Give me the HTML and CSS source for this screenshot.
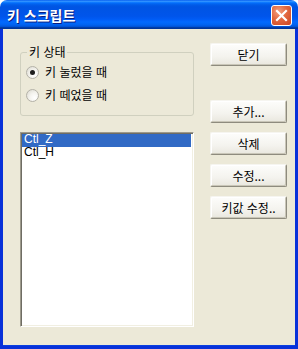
FILE: index.html
```html
<!DOCTYPE html>
<html lang="ko">
<head>
<meta charset="utf-8">
<link rel="stylesheet" href="styles.css">
</head>
<body>
<div class="window">
  <div class="titlebar">
    <span class="title">키 스크립트</span>
    <span class="close">
      <svg width="21" height="21" viewBox="0 0 21 21">
        <path d="M6 6 L15 15 M15 6 L6 15" stroke="#fff" stroke-width="2.2" stroke-linecap="square"/>
      </svg>
    </span>
  </div>
  <div class="client">
    <div class="left">
      <fieldset class="group">
        <legend>키 상태</legend>
        <div class="radio"><span class="dot checked"></span><span>키 눌렀을 때</span></div>
        <div class="radio"><span class="dot"></span><span>키 떼었을 때</span></div>
      </fieldset>
      <div class="listbox">
        <div class="item selected">Ctl_Z</div>
        <div class="item">Ctl_H</div>
      </div>
    </div>
    <div class="right">
      <div class="btn">닫기</div>
      <div class="btn gap-big">추가...</div>
      <div class="btn">삭제</div>
      <div class="btn">수정...</div>
      <div class="btn">키값 수정..</div>
    </div>
  </div>
</div>
</body>
</html>
```

FILE: styles.css
```css
html, body {
  margin: 0;
  padding: 0;
  background: #ffffff;
}
body {
  font-family: "Liberation Sans", "Noto Sans CJK KR", sans-serif;
  font-size: 12px;
  color: #000;
}
.window {
  width: 298px;
  height: 349px;
  display: flex;
  flex-direction: column;
  box-sizing: border-box;
}
.titlebar {
  height: 29px;
  flex: none;
  border-radius: 7px 7px 0 0;
  background: linear-gradient(to bottom, #0058ee 0%, #3593ff 4%, #288eff 6%, #127dff 8%, #036ffc 10%, #0262ee 14%, #0057e5 20%, #0054e3 24%, #0055eb 56%, #005bf5 66%, #026afe 76%, #0062ef 86%, #0052d6 92%, #0040ab 94%, #003092 100%);
  display: flex;
  align-items: center;
  justify-content: space-between;
  padding: 0 6px 0 7px;
  box-sizing: border-box;
}
.title {
  color: #fff;
  font-family: "Noto Sans CJK KR", sans-serif;
  font-weight: bold;
  font-size: 14px;
  line-height: 16px;
  text-shadow: 1px 1px 0 #0a1e80;
}
.close {
  width: 21px;
  height: 21px;
  box-sizing: border-box;
  border: 1px solid #fff;
  border-radius: 3px;
  background: radial-gradient(circle at 35% 30%, #f3a080 0%, #e2683f 45%, #cc4522 100%);
  display: flex;
  align-items: center;
  justify-content: center;
  margin-top: 1px;
}
.close svg {
  display: block;
  margin: -1px;
}
.client {
  flex: 1;
  background: #ece9d8;
  border-left: 3px solid #0831d9;
  border-right: 3px solid #0831d9;
  border-bottom: 3px solid #0831d9;
  box-shadow: inset 0 -1px 0 #0a40e0;
  display: flex;
  padding-left: 17px;
}
.left {
  width: 174px;
  padding-top: 16px;
  display: flex;
  flex-direction: column;
}
.group {
  margin: 0;
  padding: 4px 0 11px 5px;
  border: 1px solid #d0d0bf;
  border-radius: 3px;
  box-sizing: border-box;
  width: 174px;
  font-family: "Noto Sans CJK KR", sans-serif;
}
.group legend {
  padding: 0 2px;
  margin-left: 1px;
  line-height: 14px;
  font-size: 12px;
}
.radio {
  height: 18px;
  display: flex;
  align-items: center;
  gap: 6px;
  font-size: 12px;
  line-height: 14px;
}
.radio + .radio {
  margin-top: 5px;
}
.dot {
  width: 13px;
  height: 13px;
  box-sizing: border-box;
  border-radius: 50%;
  border: 1px solid #b4b2a8;
  background: radial-gradient(circle at 70% 70%, #ffffff 0%, #f4f3ee 45%, #d8d6cc 100%);
  display: flex;
  align-items: center;
  justify-content: center;
}
.dot.checked::after {
  content: "";
  width: 5px;
  height: 5px;
  border-radius: 50%;
  background: #1e1e1e;
}
.listbox {
  margin-top: 16px;
  height: 195px;
  box-sizing: border-box;
  background: #fff;
  border-top: 1px solid #9d9a8c;
  border-left: 1px solid #9d9a8c;
  border-right: 1px solid #ffffff;
  border-bottom: 1px solid #ffffff;
  box-shadow: inset 1px 1px 0 #6f6d64, inset -1px -1px 0 #f1efe2;
  padding: 1px 2px 1px 1px;
}
.item {
  line-height: 11px;
  height: 13px;
  padding-left: 2px;
  font-size: 12px;
  white-space: nowrap;
}
.item.selected {
  background: #316ac5;
  color: #fff;
}
.right {
  width: 77px;
  margin-left: 16px;
  padding-top: 14px;
  display: flex;
  flex-direction: column;
  gap: 9px;
}
.btn {
  height: 23px;
  box-sizing: border-box;
  border-top: 1px solid #f6f5f0;
  border-left: 1px solid #f6f5f0;
  border-right: 1px solid #8e8b7e;
  border-bottom: 1px solid #8e8b7e;
  box-shadow: inset -1px -1px 0 #c9c6b8, inset 1px 1px 0 #ffffff;
  border-radius: 2px;
  background: linear-gradient(to bottom, #fdfdfb 0%, #f4f3ee 60%, #e9e7de 100%);
  display: flex;
  align-items: center;
  justify-content: center;
  font-family: "Noto Sans CJK KR", sans-serif;
  font-size: 12px;
  line-height: 14px;
}
.btn.gap-big {
  margin-top: 25px;
}
```
